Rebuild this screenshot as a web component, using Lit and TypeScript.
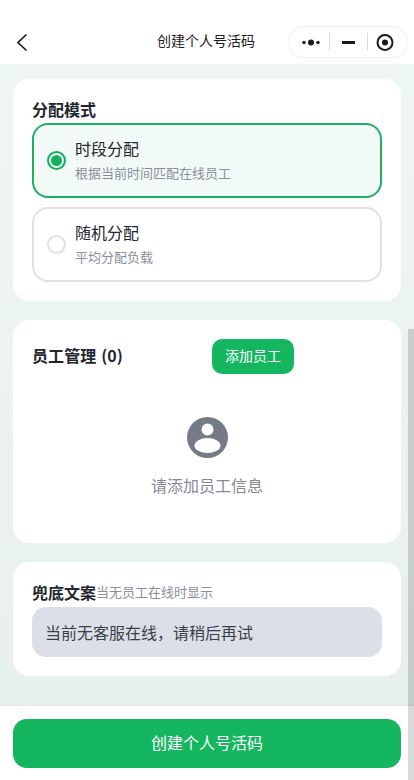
import { LitElement, html, css } from "lit";
import { customElement } from "lit/decorators.js";

@customElement("app-root")
export class AppRoot extends LitElement {
  static styles = css`
    :host {
      display: block;
      position: relative;
      width: 414px;
      height: 780px;
      overflow: hidden;
      background: #fff;
      font-family: "Noto Sans CJK SC", "Liberation Sans", sans-serif;
      color: #23262d;
    }
    .page { display: flex; flex-direction: column; height: 780px; }
    .nav {
      height: 64px;
      flex: none;
      display: flex;
      align-items: center;
      position: relative;
      background: #fff;
    }
    .back { position: absolute; left: 16px; top: 33px; width: 12px; height: 19px; }
    .nav-title {
      position: absolute;
      left: 157px;
      top: 30px;
      font-size: 14px;
      line-height: 20px;
      color: #1c1c1c;
      white-space: nowrap;
    }
    .capsule {
      position: absolute;
      left: 288px;
      top: 26px;
      width: 120px;
      height: 32px;
      box-sizing: border-box;
      border: 1px solid #efefef;
      border-radius: 16px;
      display: flex;
      align-items: center;
    }
    .capsule svg { position: absolute; left: 0; top: 0; }
    .main {
      flex: 1;
      min-height: 0;
      background: linear-gradient(#eef6f2, #e8f1ed);
      padding: 15px 13px 0;
      display: flex;
      flex-direction: column;
      gap: 19px;
    }
    .card {
      background: #fff;
      border-radius: 16px;
      padding: 20px 19px;
      box-sizing: border-box;
    }
    .c1 { height: 222px; padding-top: 18px; }
    .c1 .title { margin-bottom: 2px; }
    .c2 { height: 223px; padding-top: 19px; }
    .c3 { height: 114px; }
    .title { font-size: 16px; line-height: 24px; font-weight: 700; color: #23262d; }
    .option {
      box-sizing: border-box;
      height: 75px;
      border: 2px solid #dfe1e6;
      border-radius: 16px;
      display: flex;
      align-items: center;
      gap: 9px;
      padding-left: 13px;
      background: #fff;
    }
    .option + .option { margin-top: 9px; }
    .option.on { border-color: #20ad66; background: #f1faf6; }
    .radio {
      width: 19px;
      height: 19px;
      box-sizing: border-box;
      border: 2px solid #dfe1e6;
      border-radius: 50%;
      flex: none;
      display: flex;
      align-items: center;
      justify-content: center;
    }
    .on .radio { border-color: #15b05f; }
    .dot { width: 11px; height: 11px; border-radius: 50%; background: #15b05f; }
    .opt-text { margin-bottom: 3px; }
    .opt-title { font-size: 16px; line-height: 24px; color: #23262d; }
    .opt-sub { font-size: 13px; line-height: 19px; margin-top: 3px; color: #8a8f99; }
    .head { display: flex; align-items: center; gap: 89px; }
    .head .title {
      font-family: "Noto Sans CJK SC", sans-serif;
      width: 91px;
      white-space: nowrap;
      margin-bottom: 4px;
      word-spacing: 1px;
      letter-spacing: 0.1px;
    }
    .add {
      width: 82px;
      height: 35px;
      border-radius: 10px;
      background: #15b660;
      color: #fff;
      font-size: 14px;
      line-height: 33px;
      text-align: center;
    }
    .empty {
      display: flex;
      flex-direction: column;
      align-items: center;
      padding-top: 43px;
      gap: 15px;
    }
    .empty svg { display: block; }
    .empty-text { font-size: 16px; line-height: 24px; color: #858a94; }
    .row { display: flex; align-items: center; height: 24px; margin-top: -2px; }
    .row-sub { font-size: 13px; color: #8a8f99; line-height: 24px; }
    .input {
      height: 50px;
      margin-top: 3px;
      box-sizing: border-box;
      padding-left: 13px;
      border-radius: 14px;
      background: #dcdfe7;
      font-size: 16px;
      line-height: 50px;
      color: #3a3f47;
    }
    .footer {
      flex: none;
      height: 75px;
      box-sizing: border-box;
      border-top: 1px solid #e3e5e6;
      background: #fff;
      padding: 13px 13px 0;
    }
    .submit {
      height: 49px;
      border-radius: 14px;
      background: #15b660;
      color: #fff;
      font-size: 16px;
      line-height: 47px;
      text-align: center;
    }
    .thumb {
      position: absolute;
      right: 0;
      top: 329px;
      bottom: 0;
      width: 6px;
      background: rgba(0, 0, 0, 0.15);
    }
  `;

  render() {
    return html`
      <div class="page">
        <div class="nav">
          <svg class="back" viewBox="0 0 12 19" fill="none">
            <path d="M10.5 1.5 2 9.5l8.5 8" stroke="#1a1a1a" stroke-width="1.7" />
          </svg>
          <div class="nav-title">创建个人号活码</div>
          <div class="capsule">
            <svg width="118" height="30" viewBox="0 0 118 30">
              <circle cx="15" cy="15.5" r="1.7" fill="#1a1a1a" />
              <circle cx="22" cy="15.5" r="3" fill="#1a1a1a" />
              <circle cx="29" cy="15.5" r="1.7" fill="#1a1a1a" />
              <rect x="40" y="6" width="1" height="18" fill="#d8d8d8" />
              <rect x="53" y="14" width="13" height="3" fill="#1a1a1a" />
              <rect x="78" y="6" width="1" height="18" fill="#d8d8d8" />
              <circle cx="96" cy="15.5" r="7.5" fill="none" stroke="#1a1a1a" stroke-width="2" />
              <circle cx="96" cy="15.5" r="3" fill="#1a1a1a" />
            </svg>
          </div>
        </div>
        <div class="main">
          <section class="card c1">
            <div class="title">分配模式</div>
            <div class="option on">
              <div class="radio"><div class="dot"></div></div>
              <div class="opt-text">
                <div class="opt-title">时段分配</div>
                <div class="opt-sub">根据当前时间匹配在线员工</div>
              </div>
            </div>
            <div class="option">
              <div class="radio"></div>
              <div class="opt-text">
                <div class="opt-title">随机分配</div>
                <div class="opt-sub">平均分配负载</div>
              </div>
            </div>
          </section>
          <section class="card c2">
            <div class="head">
              <div class="title">员工管理 (0)</div>
              <div class="add">添加员工</div>
            </div>
            <div class="empty">
              <svg width="41" height="41" viewBox="0 0 41 41">
                <circle cx="20.5" cy="20.5" r="20.5" fill="#757a89" />
                <circle cx="20.5" cy="12.5" r="6" fill="#fff" />
                <ellipse cx="20.5" cy="28.5" rx="13" ry="7.5" fill="#fff" />
              </svg>
              <div class="empty-text">请添加员工信息</div>
            </div>
          </section>
          <section class="card c3">
            <div class="row">
              <span class="title">兜底文案</span><span class="row-sub">当无员工在线时显示</span>
            </div>
            <div class="input">当前无客服在线，请稍后再试</div>
          </section>
        </div>
        <div class="footer"><div class="submit">创建个人号活码</div></div>
      </div>
      <div class="thumb"></div>
    `;
  }
}
